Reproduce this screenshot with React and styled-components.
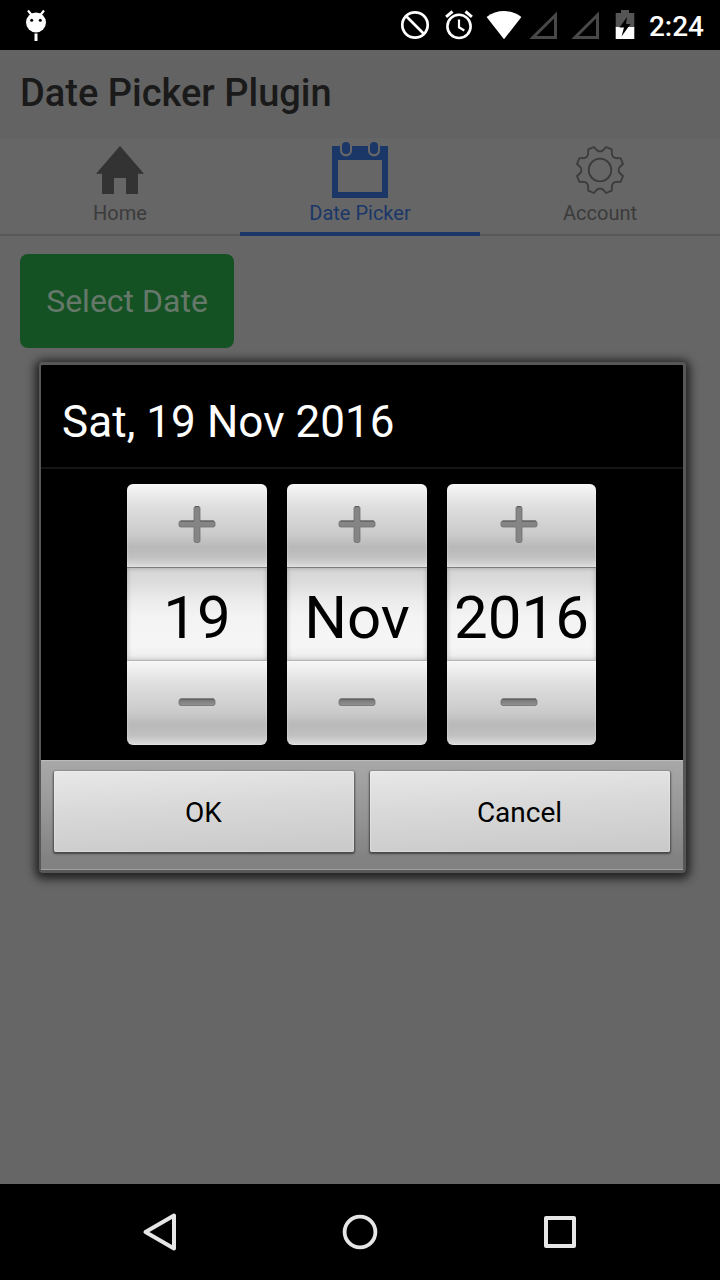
import React from "react";
import styled, { createGlobalStyle } from "styled-components";

const GlobalStyle = createGlobalStyle`
  * { box-sizing: border-box; }
  html, body { margin: 0; padding: 0; background: #000; }
  body { font-family: Roboto, "Liberation Sans", sans-serif; overflow: hidden; }
  button { font-family: inherit; border: 0; padding: 0; margin: 0; }
  svg { display: block; flex: none; }
`;

const Screen = styled.div`
  position: relative;
  width: 720px;
  height: 1280px;
  display: flex;
  flex-direction: column;
  overflow: hidden;
  background: #666;
`;

const StatusBar = styled.header`
  height: 50px;
  flex: none;
  display: flex;
  align-items: center;
  justify-content: space-between;
  padding: 0 16px 0 25px;
  background: #000;
  color: #fff;
`;

const StatusIcons = styled.div`
  display: flex;
  align-items: center;
`;

const Clock = styled.span`
  margin-left: 14px;
  font-size: 28px;
  font-weight: 500;
  line-height: 50px;
  padding-top: 3px;
`;

const TitleBar = styled.div`
  height: 88px;
  flex: none;
  padding: 0 20px;
  background: #636363;
`;

const Title = styled.h1`
  margin: 0;
  font-size: 38px;
  font-weight: 500;
  line-height: 86px;
  color: #1a1a1a;
`;

const Tabs = styled.nav`
  height: 98px;
  flex: none;
  display: grid;
  grid-template-columns: repeat(3, 1fr);
`;

const Tab = styled.button`
  display: flex;
  flex-direction: column;
  align-items: center;
  background: none;
  font-size: 20px;
  color: ${(p) => (p.$active ? "#1a3768" : "#3b3b3b")};
  border-bottom: ${(p) => (p.$active ? "4px solid #1a3768" : "2px solid #585858")};
`;

const TabLabel = styled.span`
  line-height: 24px;
  margin-top: -1px;
`;

const Content = styled.main`
  flex: 1;
  padding: 18px 20px;
`;

const SelectButton = styled.button`
  width: 214px;
  height: 94px;
  border-radius: 8px;
  background: #145224;
  color: #66786a;
  font-size: 32px;
`;

const NavBar = styled.footer`
  height: 96px;
  flex: none;
  display: grid;
  grid-template-columns: repeat(3, 200px);
  justify-content: center;
  align-items: center;
  justify-items: center;
  background: #000;
`;

const Dialog = styled.section`
  position: absolute;
  left: 39px;
  top: 362px;
  width: 647px;
  height: 511px;
  display: flex;
  flex-direction: column;
  border: 2px solid #575757;
  border-width: 3px 3px 3px 2px;
  border-radius: 4px;
  background: #000;
  box-shadow: 0 2px 10px 4px rgba(0, 0, 0, 0.68);
`;

const DialogTitle = styled.h2`
  height: 104px;
  flex: none;
  margin: 0;
  padding: 1px 21px 0;
  border-bottom: 2px solid #151515;
  color: #fff;
  font-size: 44px;
  font-weight: 400;
  line-height: 112px;
  letter-spacing: 0.06px;
`;

const Pickers = styled.div`
  flex: 1;
  display: flex;
  gap: 20px;
  padding: 15px 0 15px 86px;
`;

const Spinner = styled.div`
  width: ${(p) => p.$width}px;
  height: 261px;
  display: flex;
  flex-direction: column;
  border-radius: 6px;
  overflow: hidden;
`;

const StepButton = styled.button`
  height: ${(p) => (p.$lower ? 84 : 83)}px;
  flex: none;
  display: flex;
  justify-content: center;
  align-items: center;
  padding-right: ${(p) => (p.$wide ? 5 : 1)}px;
  padding-bottom: ${(p) => (p.$lower ? 2 : 3)}px;
  background: linear-gradient(#f7f7f7 0%, #dedede 28%, #cbcbcb 60%, #b9b9b9 76%, #c0c0c0 88%, #dcdcdc 100%);
  box-shadow: inset 0 0 2px rgba(255, 255, 255, 0.6);
`;

const SpinnerValue = styled.div`
  flex: 1;
  display: flex;
  align-items: center;
  justify-content: center;
  padding-top: 7px;
  font-size: 60px;
  line-height: 1;
  color: #000;
  border-top: 1px solid #7c7c7c;
  border-bottom: 1px solid #b5b5b5;
  background: linear-gradient(#d5d5d5 0%, #dcdcdc 16%, #ebebeb 34%, #f3f3f3 52%, #f6f6f6 84%, #ececec 100%);
  box-shadow: inset 0 0 5px rgba(0, 0, 0, 0.24);
`;

const Actions = styled.div`
  height: 110px;
  flex: none;
  display: flex;
  gap: 16px;
  padding: 10px 13.5px 0 12.5px;
  background: linear-gradient(#a8a8a8, #979797 45%, #828282 90%);
  border-top: 1px solid #bcbcbc;
  border-bottom: 1px solid #a0a0a0;
`;

const ActionButton = styled.button`
  flex: 1;
  height: 81px;
  padding-top: 1px;
  border-radius: 2px;
  background: linear-gradient(177deg, #e8e8e8, #d8d8d8 45%, #c9c9c9);
  box-shadow: 0 1px 2px 1px rgba(0, 0, 0, 0.48), inset 0 0 1px 1px rgba(255, 255, 255, 0.25);
  color: #000;
  font-size: 28px;
`;

const DroidIcon = () => (
  <svg width="22" height="32" viewBox="0 0 22 32" fill="#fff">
    <path d="M3 1.500l4 5M19 1.500l-4 5" stroke="#fff" strokeWidth="2.200" />
    <circle cx="11" cy="13.500" r="10" />
    <path d="M9.500 24.500h3v8h-3z" />
    <circle cx="6.700" cy="11.300" r="1.500" fill="#000" />
    <circle cx="15.300" cy="11.300" r="1.500" fill="#000" />
  </svg>
);

const BlockedIcon = () => (
  <svg width="30" height="30" viewBox="0 0 30 30" fill="none" stroke="#fff" strokeWidth="2.7">
    <circle cx="15" cy="15" r="12.7" />
    <path d="M6 6l18 18" />
  </svg>
);

const AlarmIcon = () => (
  <svg width="30" height="30" viewBox="0 0 30 30" fill="none" stroke="#fff" strokeWidth="2.6">
    <circle cx="15" cy="16.4" r="11.6" />
    <path d="M2.1 6.8l6.4-5.3M27.9 6.8l-6.4-5.3" strokeWidth="3" />
    <path d="M15 9.500v7.800l5.300 3.200" strokeWidth="2.200" />
  </svg>
);

const WifiIcon = () => (
  <svg width="36" height="30" viewBox="0 0 36 30" fill="#fff">
    <path d="M18 29.300L.6 6.900C11-.9 25-.9 35.400 6.900z" />
  </svg>
);

const SignalIcon = () => (
  <svg width="30" height="30" viewBox="0 0 30 30" fill="none" stroke="#484848" strokeWidth="3">
    <path d="M5 27.400L27.500 5v22.400z" />
  </svg>
);

const BatteryIcon = () => (
  <svg width="20" height="30" viewBox="0 0 20 30">
    <path d="M6 0h8v3h5.300v15H.7V3H6z" fill="#555" />
    <path d="M.7 17h18.600v12H.7z" fill="#fff" />
    <path d="M12 7L4.500 17.500H9l-2.500 9L15.500 14H11z" fill="#000" />
  </svg>
);

const HomeIcon = () => (
  <svg width="48" height="64" viewBox="0 0 48 64" fill="#333">
    <path d="M24 8L48 35.700H42V56H30V40H18V56H6V35.700H0z" />
  </svg>
);

const CalendarIcon = () => (
  <svg width="56" height="64" viewBox="0 0 56 64" fill="#1a3768">
    <path fillRule="evenodd" d="M0 8H56V60H0zM6 22V54H50V22z" />
    <rect x="8" y="2" width="12" height="16.500" rx="6" fill="#666" />
    <rect x="36" y="2" width="12" height="16.500" rx="6" fill="#666" />
    <rect x="10" y="4" width="8" height="12" rx="4" />
    <rect x="38" y="4" width="8" height="12" rx="4" />
  </svg>
);

const GearIcon = () => (
  <svg width="50" height="64" viewBox="-25 -32 50 64" fill="none" stroke="#3b3b3b" strokeWidth="1.8" strokeLinejoin="round">
    <circle r="11.3" />
    <path d="M-4.5 -21.2Q0 -15.8 4.5 -21.2L6 -23L11.8 -20.6L11.8 -18.2Q11.3 -11.3 18.2 -11.8L20.6 -11.8L23 -6L21.2 -4.5Q15.8 0 21.2 4.5L23 6L20.6 11.8L18.2 11.8Q11.3 11.3 11.8 18.2L11.8 20.6L6 23L4.5 21.2Q0 15.8 -4.5 21.2L-6 23L-11.8 20.6L-11.8 18.2Q-11.3 11.3 -18.2 11.8L-20.6 11.8L-23 6L-21.2 4.5Q-15.8 0 -21.2 -4.5L-23 -6L-20.6 -11.8L-18.2 -11.8Q-11.3 -11.3 -11.8 -18.2L-11.8 -20.6L-6 -23Z" />
  </svg>
);

const StepIcon = ({ plus }) => (
  <svg width="38" height="38" viewBox="0 0 38 38">
    <defs>
      <linearGradient id="bevel" x1="0" y1="0" x2="0" y2="1">
        <stop offset="0" stopColor="#747474" />
        <stop offset="1" stopColor="#939393" />
      </linearGradient>
    </defs>
    {plus && <path d="M18 1.500h2.500q1.500 0 1.500 1.500V16H35q2 0 2 1.500v3Q37 22 35 22H22V35.500Q22 37.500 20.500 37.500H18Q16 37.500 16 35.500V22H3Q1 22 1 20.500V17.500Q1 16 3 16H16V3Q16 1.500 18 1.500z" fill="#858585" stroke="#707070" strokeWidth=".8" />}
    {plus && <path d="M2.500 16H16M22 16H36M17 1.700H21" fill="none" stroke="#565656" strokeWidth="1" />}
    {!plus && <rect x="1" y="16" width="36" height="6.500" rx="2" fill="url(#bevel)" stroke="#707070" strokeWidth=".8" />}
    {!plus && <path d="M2.500 16H36" stroke="#565656" strokeWidth="1" />}
  </svg>
);

const BackIcon = () => (
  <svg width="40" height="40" viewBox="0 0 40 40" fill="none" stroke="#e6e6e6" strokeWidth="4" strokeLinejoin="round">
    <path d="M5.500 20L34 3.600V36.400z" />
  </svg>
);

const CircleIcon = () => (
  <svg width="40" height="40" viewBox="0 0 40 40" fill="none" stroke="#e6e6e6" strokeWidth="3.800">
    <circle cx="20" cy="20" r="15.400" />
  </svg>
);

const SquareIcon = () => (
  <svg width="40" height="40" viewBox="0 0 40 40" fill="none" stroke="#e6e6e6" strokeWidth="4" strokeLinejoin="round">
    <path d="M6 6H34V34H6z" />
  </svg>
);

const StatusSlot = styled.span`
  display: block;
  margin-left: ${(p) => p.$gap}px;
`;

const fields = [
  { value: "19", width: 140 },
  { value: "Nov", width: 140 },
  { value: "2016", width: 149, wide: true },
];

export default function App() {
  return (
    <>
      <GlobalStyle />
      <Screen>
        <StatusBar>
          <DroidIcon />
          <StatusIcons>
            <BlockedIcon />
            <StatusSlot $gap={14}><AlarmIcon /></StatusSlot>
            <StatusSlot $gap={12}><WifiIcon /></StatusSlot>
            <StatusSlot $gap={6}><SignalIcon /></StatusSlot>
            <StatusSlot $gap={12}><SignalIcon /></StatusSlot>
            <StatusSlot $gap={15}><BatteryIcon /></StatusSlot>
            <Clock>2:24</Clock>
          </StatusIcons>
        </StatusBar>
        <TitleBar>
          <Title>Date Picker Plugin</Title>
        </TitleBar>
        <Tabs>
          <Tab><HomeIcon /><TabLabel>Home</TabLabel></Tab>
          <Tab $active><CalendarIcon /><TabLabel>Date Picker</TabLabel></Tab>
          <Tab><GearIcon /><TabLabel>Account</TabLabel></Tab>
        </Tabs>
        <Content>
          <SelectButton>Select Date</SelectButton>
        </Content>
        <NavBar>
          <BackIcon />
          <CircleIcon />
          <SquareIcon />
        </NavBar>
        <Dialog>
          <DialogTitle>Sat, 19 Nov 2016</DialogTitle>
          <Pickers>
            {fields.map((field) => (
              <Spinner key={field.value} $width={field.width}>
                <StepButton $wide={field.wide}><StepIcon plus /></StepButton>
                <SpinnerValue>{field.value}</SpinnerValue>
                <StepButton $lower $wide={field.wide}><StepIcon /></StepButton>
              </Spinner>
            ))}
          </Pickers>
          <Actions>
            <ActionButton>OK</ActionButton>
            <ActionButton>Cancel</ActionButton>
          </Actions>
        </Dialog>
      </Screen>
    </>
  );
}
